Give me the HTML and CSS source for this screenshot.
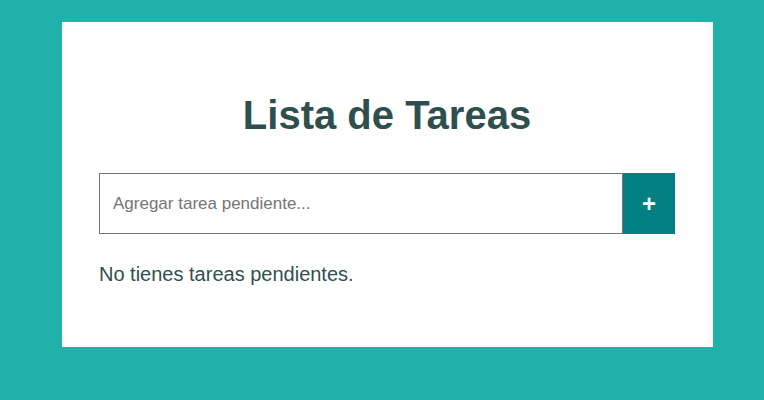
FILE: index.html
```html
<!DOCTYPE html>
<html lang="es">
<head>
<meta charset="utf-8">
<title>Lista de Tareas</title>
<link rel="stylesheet" href="styles.css">
</head>
<body>
<main class="card">
  <h1 class="title">Lista de Tareas</h1>
  <form class="add-form">
    <input class="task-input" type="text" placeholder="Agregar tarea pendiente...">
    <button class="add-btn" type="button">+</button>
  </form>
  <p class="empty">No tienes tareas pendientes.</p>
</main>
</body>
</html>
```

FILE: styles.css
```css
html, body {
  margin: 0;
  padding: 0;
  background: #20b2aa;
  height: 100%;
}
body {
  font-family: "Liberation Sans", Arial, sans-serif;
  padding: 22px 51px 0 62px;
  box-sizing: border-box;
}
.card {
  background: #ffffff;
  height: 325px;
  box-sizing: border-box;
  padding: 71px 38px 0 37px;
}
.title {
  margin: 0;
  text-align: center;
  font-size: 40px;
  font-weight: bold;
  color: #2f4f4f;
  line-height: 44px;
}
.add-form {
  display: flex;
  margin-top: 36px;
  height: 61px;
}
.task-input {
  flex: 1;
  min-width: 0;
  height: 61px;
  box-sizing: border-box;
  border: 1px solid #757575;
  padding: 0 13px;
  font-family: "Liberation Sans", Arial, sans-serif;
  font-size: 17px;
  color: #2f4f4f;
  outline: none;
  margin: 0;
}
.task-input::placeholder {
  color: #757575;
}
.add-btn {
  width: 52px;
  height: 61px;
  border: none;
  margin: 0;
  padding: 0;
  background: #008080;
  color: #ffffff;
  font-family: "Liberation Sans", Arial, sans-serif;
  font-size: 24px;
  font-weight: bold;
  cursor: pointer;
}
.empty {
  margin: 28px 0 0 0;
  font-size: 20px;
  color: #2f4f4f;
  line-height: 24px;
}
```
